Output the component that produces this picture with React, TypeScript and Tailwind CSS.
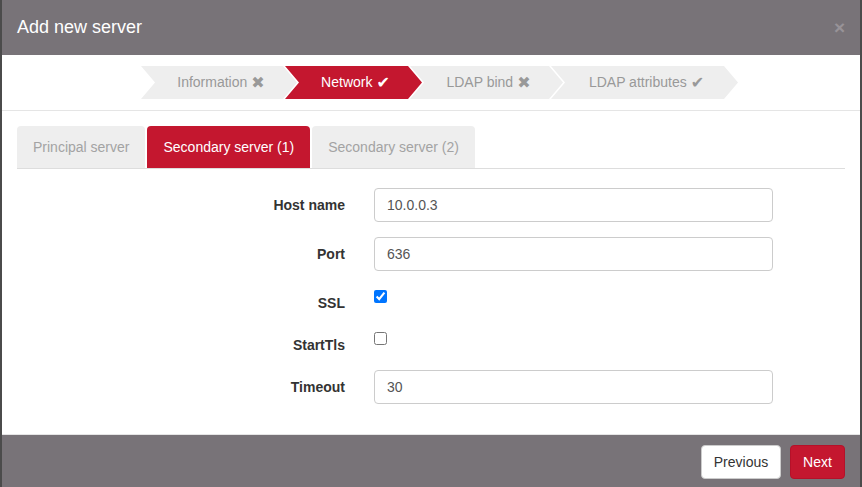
const steps = [
  { label: "Information", icon: "✖", width: "w-[156px]", active: false, first: true },
  { label: "Network", icon: "✔", width: "w-[137px]", active: true, first: false },
  { label: "LDAP bind", icon: "✖", width: "w-[153px]", active: false, first: false },
  { label: "LDAP attributes", icon: "✔", width: "w-[187px]", active: false, first: false },
];

const tabs = [
  { label: "Principal server", active: false },
  { label: "Secondary server (1)", active: true },
  { label: "Secondary server (2)", active: false },
];

function TextRow({ label, value }: { label: string; value: string }) {
  return (
    <div className="mb-[15px] flex items-center">
      <label className="w-[328px] text-right text-[14px] font-bold text-[#333]">{label}</label>
      <input
        type="text"
        defaultValue={value}
        className="ml-[29px] h-[34px] w-[399px] rounded border border-[#ccc] bg-white px-3 text-[14px] text-[#555] outline-none"
      />
    </div>
  );
}

function CheckRow({ label, checked }: { label: string; checked: boolean }) {
  return (
    <div className="mb-[15px] flex h-[27px] items-start">
      <label className="w-[328px] pt-[7px] text-right text-[14px] leading-5 font-bold text-[#333]">
        {label}
      </label>
      <div className="ml-[29px] pt-[4px]">
        <input type="checkbox" defaultChecked={checked} className="m-0 block h-[13px] w-[13px]" />
      </div>
    </div>
  );
}

export default function App() {
  return (
    <div
      className="h-[487px] w-[862px] overflow-hidden bg-[#4b4b4b]"
      style={{ fontFamily: '"Liberation Sans", Arial, sans-serif' }}
    >
      <div className="mx-[2px] w-[858px]">
        {/* header */}
        <div className="flex h-[55px] items-center justify-between bg-[#787378] px-[15px]">
          <h4 className="text-[18px] text-white">Add new server</h4>
          <span className="mr-[0px] text-[19px] leading-none font-bold text-[#989398]">×</span>
        </div>

        {/* body */}
        <div className="bg-white">
          <div className="flex border-b border-[#e5e5e5] pt-[11px] pb-[11px] pl-[139px]">
            {steps.map((s) => (
              <div
                key={s.label}
                className={`flex h-[33px] ${s.width} items-center justify-center text-[14px] ${
                  s.first ? "" : "-ml-[12px]"
                } ${s.active ? "bg-[#c4172f] text-white" : "bg-[#eeeeee] text-[#999]"}`}
                style={{
                  clipPath:
                    "polygon(0 0, calc(100% - 14px) 0, 100% 50%, calc(100% - 14px) 100%, 0 100%, 14px 50%)",
                }}
              >
                <span className="pl-[4px]">{s.label}</span>
                <span
                  className="ml-[4px] text-[16px] leading-none"
                  style={{ fontFamily: '"DejaVu Sans", sans-serif' }}
                >
                  {s.icon}
                </span>
              </div>
            ))}
          </div>

          <div className="px-[15px] pt-[15px] pb-[15px]">
            <div className="flex gap-[2px] border-b border-[#ddd]">
              {tabs.map((t) => (
                <div
                  key={t.label}
                  className={`h-[42px] rounded-t px-[16px] pt-[11px] text-[14px] leading-5 ${
                    t.active ? "bg-[#c4172f] text-white" : "bg-[#eeeeee] text-[#a3a3a3]"
                  }`}
                >
                  {t.label}
                </div>
              ))}
            </div>

            <div className="pt-[19px]">
              <TextRow label="Host name" value="10.0.0.3" />
              <TextRow label="Port" value="636" />
              <CheckRow label="SSL" checked={true} />
              <CheckRow label="StartTls" checked={false} />
              <TextRow label="Timeout" value="30" />
            </div>
          </div>
        </div>

        {/* footer */}
        <div className="flex h-[60px] justify-end gap-[9px] border-t border-[#e5e5e5] bg-[#787378] px-[15px] pt-[10px]">
          <button className="h-[34px] w-[80px] rounded border border-[#ccc] bg-white text-[14px] text-[#333]">
            Previous
          </button>
          <button className="h-[34px] w-[55px] rounded border border-[#b51129] bg-[#c4172f] text-[14px] text-white">
            Next
          </button>
        </div>
      </div>
    </div>
  );
}
